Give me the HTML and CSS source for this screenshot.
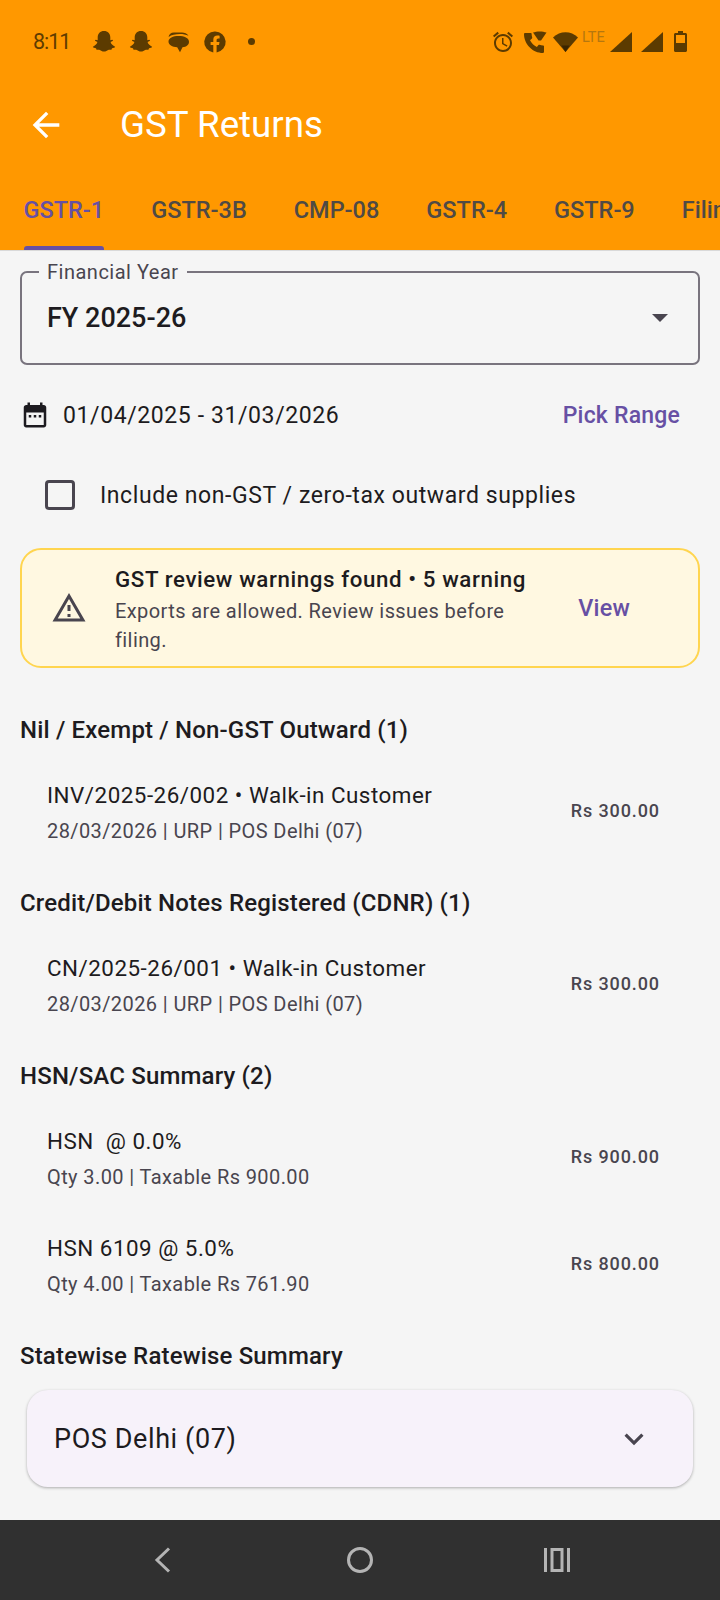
FILE: index.html
```html
<!DOCTYPE html>
<html lang="en">
<head>
    <meta charset="UTF-8">
    <meta name="viewport" content="width=device-width, initial-scale=1.0">
    <title>GST Returns</title>
    <link rel="stylesheet" href="styles.css">
</head>
<body>
    <div class="app">
        <header class="top">
            <div class="status-bar">
                <span class="clock">8:11</span>
                <div class="notif-icons">
                    <svg class="s-icon" viewBox="0 0 24 24"><path d="M12 1c3.800 0 6.300 2.700 6.300 6.300v3l1.900-.6c.8 0 1.100 1 .4 1.400l-2 1c.5 2 2 3.500 4.100 4.300.6.200.5.900-.1 1.100-1 .4-2 .5-2.600.8-.3.500-.2 1.400-.8 1.500-1-.1-2-.3-3 .1-1.300.5-2.300 1.700-4.200 1.700s-2.900-1.200-4.200-1.700c-1-.4-2-.2-3-.1-.6-.1-.5-1-.8-1.500-.6-.3-1.600-.4-2.600-.8-.6-.2-.7-.9-.1-1.100 2.100-.8 3.600-2.300 4.100-4.300l-2-1c-.7-.4-.4-1.400.4-1.400l1.900.6v-3C5.700 3.700 8.200 1 12 1z"/></svg>
                    <svg class="s-icon" viewBox="0 0 24 24"><path d="M12 1c3.800 0 6.300 2.700 6.300 6.300v3l1.900-.6c.8 0 1.100 1 .4 1.400l-2 1c.5 2 2 3.500 4.100 4.300.6.200.5.900-.1 1.100-1 .4-2 .5-2.600.8-.3.500-.2 1.400-.8 1.500-1-.1-2-.3-3 .1-1.300.5-2.300 1.700-4.200 1.700s-2.900-1.200-4.200-1.700c-1-.4-2-.2-3-.1-.6-.1-.5-1-.8-1.500-.6-.3-1.600-.4-2.600-.8-.6-.2-.7-.9-.1-1.100 2.100-.8 3.600-2.300 4.100-4.300l-2-1c-.7-.4-.4-1.400.4-1.400l1.900.6v-3C5.700 3.700 8.200 1 12 1z"/></svg>
                    <svg class="s-icon" viewBox="0 0 24 24"><path d="M8 2.500h8c2.500 0 5 1 6.500 3.200C20 4.500 17 4 14 4 9.500 4 5.500 4.800 2.600 7 2.800 4.500 5 2.500 8 2.500z"/><path d="M12.500 6c5.800 0 10.500 1.800 10.500 5.800 0 3.200-2.600 5.200-6.500 5.500l-2.500 5-2.800-5C6.200 17 2.500 15 2.500 11.500 2.500 8 7 6 12.500 6z"/></svg>
                    <svg class="s-icon" viewBox="0 0 24 24"><path fill-rule="evenodd" d="M12 1.500a10.500 10.500 0 0 0-1.700 20.900v-7.300H7.600V12h2.700V9.700c0-2.600 1.600-4.100 4-4.100 1.100 0 2.300.2 2.300.2v2.600h-1.300c-1.300 0-1.700.8-1.700 1.600V12h2.900l-.5 3.100h-2.400v7.300A10.500 10.500 0 0 0 12 1.500z"/></svg>
                    <span class="dot"></span>
                </div>
                <div class="sys-icons">
                    <svg class="s-icon" viewBox="0 0 24 24"><path d="M22 5.720l-4.600-3.860-1.290 1.530 4.600 3.860L22 5.720zM7.880 3.390L6.600 1.860 2 5.710l1.290 1.530 4.590-3.850zM12.500 8H11v6l4.750 2.850.75-1.230-4-2.370V8zM12 4c-4.970 0-9 4.030-9 9s4.020 9 9 9c4.970 0 9-4.030 9-9s-4.030-9-9-9zm0 16c-3.870 0-7-3.130-7-7s3.130-7 7-7 7 3.130 7 7-3.130 7-7 7z"/></svg>
                    <svg class="s-icon call" viewBox="0 0 24 24"><path d="M20.010 15.380c-1.230 0-2.420-.2-3.530-.56-.35-.12-.74-.03-1.010.24l-1.570 1.970c-2.830-1.350-5.480-3.900-6.890-6.830l1.950-1.660c.27-.28.35-.67.24-1.020-.37-1.110-.56-2.300-.56-3.530 0-.54-.45-.99-.99-.99H2.190C1.650 3 1 3.240 1 3.990 1 14.280 9.730 23 20.010 23c.71 0 .99-.63.99-1.180v-5.450c0-.54-.45-.99-.99-.99z"/><path d="M10 2.500c3.800-1.500 9.500-1.500 13.500 0l-5.500 8h-2.500z"/></svg>
                    <svg class="s-icon wifi" viewBox="0 0 25 22"><path d="M12.500 21L0 6.500C7-.5 18-.5 25 6.500z"/><path class="wifi-tip" d="M12.500 21L8.500 14.500h8z"/></svg>
                    <span class="lte">LTE</span>
                    <svg class="s-icon signal sig-first" viewBox="0 0 22 20"><path d="M22 0v20H0z"/></svg>
                    <svg class="s-icon signal" viewBox="0 0 22 20"><path d="M22 0v20H0z"/></svg>
                    <svg class="s-icon batt" viewBox="0 0 13 21"><path fill-rule="evenodd" d="M4 0h5v2h2.500c.800 0 1.500.7 1.500 1.500v16c0 .800-.7 1.500-1.500 1.500h-10C.7 21 0 20.300 0 19.500v-16C0 2.700.7 2 1.500 2H4zM2 4v8h9V4z"/></svg>
                </div>
            </div>
            <div class="app-bar">
                <svg class="back" viewBox="0 0 24 24"><path d="M20 11H7.830l5.590-5.590L12 4l-8 8 8 8 1.410-1.410L7.830 13H20v-2z"/></svg>
                <h1>GST Returns</h1>
            </div>
            <nav class="tabs">
                <span class="tab active">GSTR-1</span>
                <span class="tab">GSTR-3B</span>
                <span class="tab">CMP-08</span>
                <span class="tab">GSTR-4</span>
                <span class="tab">GSTR-9</span>
                <span class="tab">Filing</span>
            </nav>
        </header>

        <main class="content">
            <div class="field">
                <span class="field-label">Financial Year</span>
                <span class="field-value">FY 2025-26</span>
                <span class="caret"></span>
            </div>

            <div class="range-row">
                <svg class="cal" viewBox="0 0 24 24"><path d="M19 4h-1V2h-2v2H8V2H6v2H5c-1.100 0-2 .9-2 2v14c0 1.100.9 2 2 2h14c1.100 0 2-.9 2-2V6c0-1.100-.9-2-2-2zm0 16H5V10h14v10zM9 14H7v-2h2v2zm4 0h-2v-2h2v2zm4 0h-2v-2h2v2z"/></svg>
                <span class="range-text">01/04/2025 - 31/03/2026</span>
                <span class="link">Pick Range</span>
            </div>

            <div class="check-row">
                <span class="checkbox"></span>
                <span class="check-text">Include non-GST / zero-tax outward supplies</span>
            </div>

            <div class="warn-card">
                <svg class="warn-icon" viewBox="0 0 24 24"><path d="M12 5.990L19.530 19H4.470L12 5.990M12 2L1 21h22L12 2zm1 14h-2v2h2v-2zm0-6h-2v4h2v-4z"/></svg>
                <div class="warn-body">
                    <div class="warn-title">GST review warnings found • 5 warning</div>
                    <div class="warn-sub">Exports are allowed. Review issues before filing.</div>
                </div>
                <span class="link warn-link">View</span>
            </div>

            <h2 class="sec">Nil / Exempt / Non-GST Outward (1)</h2>
            <div class="row">
                <div>
                    <div class="row-title">INV/2025-26/002 • Walk-in Customer</div>
                    <div class="row-sub">28/03/2026 | URP | POS Delhi (07)</div>
                </div>
                <span class="amt">Rs 300.00</span>
            </div>

            <h2 class="sec">Credit/Debit Notes Registered (CDNR) (1)</h2>
            <div class="row">
                <div>
                    <div class="row-title">CN/2025-26/001 • Walk-in Customer</div>
                    <div class="row-sub">28/03/2026 | URP | POS Delhi (07)</div>
                </div>
                <span class="amt">Rs 300.00</span>
            </div>

            <h2 class="sec">HSN/SAC Summary (2)</h2>
            <div class="row">
                <div>
                    <div class="row-title">HSN &nbsp;@ 0.0%</div>
                    <div class="row-sub">Qty 3.00 | Taxable Rs 900.00</div>
                </div>
                <span class="amt">Rs 900.00</span>
            </div>
            <div class="row">
                <div>
                    <div class="row-title">HSN 6109 @ 5.0%</div>
                    <div class="row-sub">Qty 4.00 | Taxable Rs 761.90</div>
                </div>
                <span class="amt">Rs 800.00</span>
            </div>

            <h2 class="sec">Statewise Ratewise Summary</h2>
            <div class="pos-card">
                <span>POS Delhi (07)</span>
                <svg class="chev" viewBox="0 0 24 24"><path d="M16.590 8.590L12 13.170 7.410 8.590 6 10l6 6 6-6z"/></svg>
            </div>
        </main>

        <footer class="nav-bar">
            <svg class="nav-icon" viewBox="0 0 30 40"><path d="M21 8.500L9 20l12 11.500" /></svg>
            <svg class="nav-icon" viewBox="0 0 30 40"><circle cx="15" cy="20" r="11.500" /></svg>
            <svg class="nav-icon" viewBox="0 0 30 40"><path d="M3.500 8v24M26.500 8v24" /><rect x="10" y="9.500" width="10" height="21" /></svg>
        </footer>
    </div>
</body>
</html>
```

FILE: styles.css
```css
* {
    box-sizing: border-box;
}
html, body {
    margin: 0;
    padding: 0;
}
body {
    font-family: Roboto, "Liberation Sans", sans-serif;
    background-color: #f5f5f5;
    color: #1d1b20;
}
.app {
    width: 720px;
    height: 1600px;
    display: flex;
    flex-direction: column;
    overflow: hidden;
}

/* header */
.top {
    background-color: #ff9800;
    height: 251px;
    flex-shrink: 0;
    border-bottom: 1px solid #d9d9d9;
}
.status-bar {
    height: 82px;
    display: flex;
    align-items: center;
    padding: 1px 33px 0;
    color: #5f3c00;
}
.clock {
    font-size: 21.5px;
    letter-spacing: -1px;
    width: 59px;
}
.notif-icons {
    display: flex;
    align-items: center;
    gap: 13px;
}
.s-icon {
    width: 24px;
    height: 24px;
    fill: #5c3b00;
}
.dot {
    width: 7px;
    height: 7px;
    border-radius: 50%;
    background-color: #5c3b00;
    margin-left: 8px;
}
.sys-icons {
    margin-left: auto;
    display: flex;
    align-items: center;
}
.sys-icons .call {
    margin-left: 8px;
}
.sys-icons .wifi {
    width: 25px;
    height: 22px;
    margin-left: 6px;
}
.wifi-tip {
    fill: #3a2500;
}
.lte {
    font-size: 14.5px;
    color: #b5770f;
    width: 24px;
    margin-left: 4px;
    align-self: flex-start;
    margin-top: -1px;
}
.sys-icons .signal {
    width: 22px;
    height: 20px;
    margin-left: 9px;
}
.sys-icons .sig-first {
    margin-left: 4px;
}
.sys-icons .batt {
    width: 13px;
    height: 21px;
    margin-left: 11px;
}
.app-bar {
    height: 80px;
    display: flex;
    align-items: center;
    padding: 5px 0 0 26px;
}
.back {
    width: 40px;
    height: 40px;
    fill: #fff;
}
h1 {
    margin: 0 0 0 54px;
    font-size: 36.7px;
    font-weight: 400;
    color: #fff;
}
.tabs {
    height: 88px;
    display: flex;
    gap: 47px;
    padding-left: 23.5px;
    white-space: nowrap;
    overflow: hidden;
}
.tab {
    position: relative;
    font-size: 23.5px;
    font-weight: 500;
    color: #4f4a45;
    padding-top: 34px;
}
.tab.active {
    color: #6750a4;
}
.tab.active::after {
    content: "";
    position: absolute;
    left: 0;
    right: 0;
    bottom: 0;
    height: 4px;
    border-radius: 3px 3px 0 0;
    background-color: #6750a4;
}

/* form */
.content {
    flex: 1;
    overflow: hidden;
    padding: 20px 20px 0;
}
.field {
    position: relative;
    height: 94px;
    border: 2px solid #79747e;
    border-radius: 7px;
    display: flex;
    align-items: center;
    padding: 0 25px;
    margin-bottom: 28px;
}
.field-label {
    position: absolute;
    left: 17px;
    top: -13px;
    padding: 0 8px;
    background-color: #f5f5f5;
    font-size: 20px;
    color: #49454f;
    letter-spacing: 0.5px;
    line-height: 24px;
}
.field-value {
    font-size: 27px;
    font-weight: 500;
    color: #1d1b20;
}
.caret {
    margin-left: auto;
    margin-right: 5px;
    width: 0;
    height: 0;
    border-left: 8px solid transparent;
    border-right: 8px solid transparent;
    border-top: 8px solid #49454f;
}
.range-row {
    display: flex;
    align-items: center;
    height: 44px;
    margin-bottom: 36px;
}
.cal {
    width: 30px;
    height: 30px;
    margin-right: 13px;
    fill: #1d1b20;
}
.range-text {
    font-size: 23px;
    letter-spacing: 0.6px;
    color: #1d1b20;
}
.link {
    color: #6750a4;
    font-size: 23px;
    font-weight: 500;
    letter-spacing: 0.2px;
}
.range-row .link {
    margin-left: auto;
    margin-right: 20px;
}
.check-row {
    display: flex;
    align-items: center;
    height: 44px;
    padding-left: 25px;
    margin-bottom: 31px;
}
.checkbox {
    width: 30px;
    height: 30px;
    border: 3.5px solid #49454f;
    border-radius: 4px;
    margin-right: 25px;
}
.check-text {
    font-size: 23px;
    letter-spacing: 0.58px;
    color: #1d1b20;
}

/* warning */
.warn-card {
    background-color: #fff8e1;
    border: 2px solid #ffd54f;
    border-radius: 21px;
    height: 120px;
    display: flex;
    align-items: center;
    padding: 0 68px 0 29px;
    margin-bottom: 46px;
}
.warn-icon {
    width: 36px;
    height: 36px;
    fill: #49454f;
    flex-shrink: 0;
}
.warn-body {
    width: 420px;
    margin-left: 28px;
    flex-shrink: 0;
}
.warn-title {
    font-size: 22.3px;
    font-weight: 500;
    letter-spacing: 0.6px;
    line-height: 35px;
}
.warn-sub {
    font-size: 20px;
    letter-spacing: 0.4px;
    line-height: 29px;
    color: #49454f;
}
.warn-link {
    margin-left: auto;
    font-size: 23.4px;
}

/* sections */
.sec {
    font-size: 24px;
    font-weight: 500;
    letter-spacing: 0.17px;
    margin: 0 0 12px;
    line-height: 32px;
}
.row {
    display: flex;
    align-items: center;
    justify-content: space-between;
    height: 107px;
    padding: 1px 40px 0 27px;
}
.row + .sec {
    margin-top: 22px;
}
.row-title {
    font-size: 22.4px;
    letter-spacing: 0.5px;
    line-height: 36px;
}
.row-sub {
    font-size: 20px;
    letter-spacing: 0.4px;
    color: #49454f;
    line-height: 33px;
    margin-top: 2px;
}
.amt {
    font-size: 18px;
    font-weight: 500;
    letter-spacing: 0.9px;
    color: #49454f;
    margin-bottom: 3px;
}
.pos-card {
    margin: 18px 7px 0;
    height: 97px;
    border-radius: 21px;
    background-color: #f7f2fa;
    box-shadow: 0 1px 3px rgba(0,0,0,0.3);
    display: flex;
    align-items: center;
    justify-content: space-between;
    padding: 0 40px 0 27px;
    font-size: 27px;
    letter-spacing: 0.6px;
}
.chev {
    width: 38px;
    height: 38px;
    fill: #49454f;
}

/* nav */
.nav-bar {
    height: 80px;
    flex-shrink: 0;
    background-color: #303030;
    display: flex;
    align-items: center;
    justify-content: center;
    gap: 167px;
}
.nav-icon {
    width: 30px;
    height: 40px;
    fill: none;
    stroke: #b4b4b4;
    stroke-width: 3;
}
```
